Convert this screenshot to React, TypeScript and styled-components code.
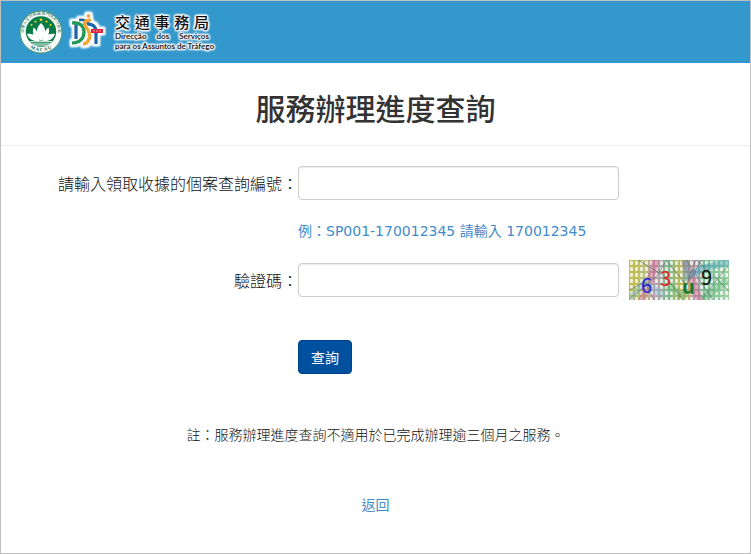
import React from "react";
import styled, { createGlobalStyle } from "styled-components";

const cjk = `"Noto Sans CJK TC", sans-serif`;

const GlobalStyle = createGlobalStyle`
  *, *::before, *::after { box-sizing: border-box; }
  body {
    margin: 0;
    background: #fff;
    color: #333;
    font: 14px/20px "DejaVu Sans", ${cjk};
  }
`;

const Page = styled.div`
  min-height: 100vh;
  border: 1px solid #bfbfbf;
`;

const Header = styled.header`
  display: flex;
  align-items: center;
  height: 62px;
  padding: 0 18px;
  background: #3398cc;
`;

const Brand = styled.a`
  display: flex;
  align-items: center;
  gap: 4px;
  color: #111;
  text-decoration: none;
`;

const Wordmark = styled.div`
  width: 94px;
  margin-left: 2px;
  text-shadow: 0 0 2px #fff, 0 0 2px #fff, 0 0 2px #fff, 0 0 3px #fff, 0 0 3px #fff,
    1px 1px 2px #fff, -1px -1px 2px #fff, 1px -1px 2px #fff, -1px 1px 2px #fff;
`;

const Spread = styled.div`
  display: flex;
  justify-content: space-between;
  white-space: nowrap;
`;

const ChineseName = styled(Spread)`
  font: 500 15px/18px ${cjk};
`;

const LatinName = styled(Spread)`
  color: #222;
  font: 700 8px/10px Lato, "Liberation Sans", sans-serif;
`;

const TitleBar = styled.div`
  padding: 22px 16px 16px;
  border-bottom: 1px solid #eee;
`;

const Title = styled.h1`
  margin: 0;
  font: 500 30px/44px ${cjk};
  text-align: center;
`;

const Form = styled.form`
  display: grid;
  grid-template-columns: 297fr 321fr 131fr;
  align-items: center;
  padding-top: 20px;
`;

const Label = styled.label`
  grid-column: 1;
  font: 300 16px/24px ${cjk};
  color: #111;
  text-align: right;
  white-space: nowrap;
`;

const TextInput = styled.input`
  grid-column: 2;
  width: 100%;
  height: 34px;
  padding: 6px 12px;
  border: 1px solid #ccc;
  border-radius: 4px;
  background: #fff;
  box-shadow: inset 0 1px 1px rgba(0, 0, 0, 0.075);
  color: #555;
  font: inherit;
`;

const Hint = styled.p`
  grid-column: 2 / 4;
  margin: 21px 0 19px;
  color: #428bca;
  white-space: nowrap;
`;

const Captcha = styled.div`
  grid-column: 3;
  padding-left: 10px;

  svg { display: block; }
`;

const SubmitButton = styled.button`
  grid-column: 2;
  justify-self: start;
  height: 34px;
  margin-top: 40px;
  padding: 0 12px;
  border: 1px solid #003f8a;
  border-radius: 4px;
  background: #0050a0;
  color: #fff;
  font: 400 14px/20px ${cjk};
  cursor: pointer;
`;

const Footer = styled.footer`
  display: grid;
  justify-items: center;
  gap: 50px;
  padding: 50px 16px 32px;
  font: 300 14px/20px ${cjk};
`;

const Note = styled.p`
  margin: 0;
  color: #111;
`;

const BackLink = styled.a`
  color: #428bca;
  font-weight: 400;
  text-decoration: none;
`;

function Emblem() {
  return (
    <svg width="44" height="44" viewBox="0 0 44 44" role="img" aria-label="MACAU">
      <defs>
        <path id="ringTop" d="M7.2 30A17 17 0 1 1 36.8 30" />
        <path id="ringBottom" d="M6.5 33.5A19.5 19.5 0 0 0 37.5 33.5" />
      </defs>
      <circle cx="22" cy="22" r="21" fill="#fff" stroke="#4e9873" strokeWidth="1" />
      <circle cx="22" cy="21.5" r="15.2" fill="#087a43" />
      <text fontFamily='"Noto Sans CJK TC", sans-serif' fontSize="4" fill="#286646">
        <textPath href="#ringTop" startOffset="50%" textAnchor="middle">中華人民共和國澳門特別行政區</textPath>
      </text>
      <text fontFamily="Liberation Serif, serif" fontSize="5" fontWeight="700" fill="#176442">
        <textPath href="#ringBottom" startOffset="50%" textAnchor="middle">M A C A U</textPath>
      </text>
      <g fill="#f3e32d">
        {[[12.5, 15, 1.5], [16.5, 11.5, 1.6], [22, 9.7, 2.1], [27.5, 11.5, 1.6], [31.5, 15, 1.5]].map(([x, y, s]) => (
          <path key={x} transform={`translate(${x} ${y}) scale(${s})`} d="M0-1 .24-.3 1-.3.38.14.6.85 0 .42-.6.85-.38.14-1-.3-.24-.3Z" />
        ))}
      </g>
      <g fill="#fff">
        <path d="M22 13C16.5 18 16.5 25 22 31C27.5 25 27.5 18 22 13Z" />
        <path d="M14.5 17.5C12.5 24 15.5 29 21.5 31C18.5 26.5 19.5 20.5 14.5 17.5Z" />
        <path d="M29.5 17.5C31.5 24 28.5 29 22.5 31C25.5 26.5 24.5 20.5 29.5 17.5Z" />
        <path d="M8 24C13.5 22.5 18 26 20.5 31C14.5 31.5 10 29.5 8 24Z" />
        <path d="M36 24C30.5 22.5 26 26 23.5 31C29.5 31.5 34 29.5 36 24Z" />
        <path d="M11 31.2H33V32.3H11ZM13 33.6H31V34.4H13ZM16 35.5H28V36.1H16Z" />
      </g>
    </svg>
  );
}

function DsatMark() {
  return (
    <svg width="42" height="44" viewBox="0 0 42 44" aria-hidden="true">
      <defs>
        <filter id="halo" x="-20%" y="-20%" width="140%" height="140%">
          <feMorphology in="SourceAlpha" operator="dilate" radius="2" result="wide" />
          <feGaussianBlur in="wide" stdDeviation="1" result="soft" />
          <feFlood floodColor="#fff" />
          <feComposite in2="soft" operator="in" result="white" />
          <feMerge>
            <feMergeNode in="white" />
            <feMergeNode in="white" />
            <feMergeNode in="SourceGraphic" />
          </feMerge>
        </filter>
      </defs>
      <g filter="url(#halo)" fill="none" strokeWidth="3.6">
        <path d="M9 13V29" stroke="#1769ad" />
        <path d="M5 13C13 12 17 16 17 22C17 28 13 33 5 33" stroke="#1b9c58" />
        <path d="M12 10C17 9 20 11 22 15" stroke="#1769ad" strokeWidth="3" />
        <path d="M21 14C26 14 29 17 29 22V34" stroke="#1769ad" />
        <path d="M24 10C18 10 16 13 19 17C23 22 24 27 21 31C20 33 18 34 16 34" stroke="#f3a733" />
        <circle cx="21.5" cy="6" r="1" fill="#f3a733" stroke="#f3a733" strokeWidth="2" />
        <path d="M24 19H36V23H24Z" fill="#e71f35" />
      </g>
      <path d="M26 21H35" stroke="#f7a6ad" strokeWidth="1" strokeDasharray="2 1" />
    </svg>
  );
}

function CaptchaPicture() {
  return (
    <svg width="100" height="40" viewBox="0 0 100 40" role="img" aria-label="驗證碼">
      <defs>
        <linearGradient id="wash">
          <stop offset="0" stopColor="#c4bd48" />
          <stop offset=".16" stopColor="#b9bf78" />
          <stop offset=".25" stopColor="#c69bb0" />
          <stop offset=".4" stopColor="#79b98d" />
          <stop offset=".54" stopColor="#cfba51" />
          <stop offset=".65" stopColor="#b99ab3" />
          <stop offset=".76" stopColor="#79bd92" />
          <stop offset="1" stopColor="#a4d2a7" />
        </linearGradient>
        <pattern id="mesh" width="5" height="6" patternUnits="userSpaceOnUse">
          <rect x="1" y="1" width="3" height="4" rx="1" fill="#fff" fillOpacity=".75" />
        </pattern>
        <clipPath id="frame"><path d="M0 0H100V40H0Z" /></clipPath>
      </defs>
      <g clipPath="url(#frame)">
        <path d="M0 0H100V40H0Z" fill="url(#wash)" />
        <path d="M0 0H100V40H0Z" fill="url(#mesh)" />
        <g fill="none" strokeWidth="7" strokeOpacity=".45">
          <path d="M27 0L20 23L12 42" stroke="#c65a84" />
          <path d="M55 0L64 21L71 42" stroke="#d16186" />
          <path d="M57 0V17L75 8L101 2" stroke="#3d9bbb" />
          <path d="M0 40L16 22L34 36" stroke="#83b9c4" />
          <path d="M39 25L57 38M74 39L98 20" stroke="#62b876" />
        </g>
        <g fill="none" stroke="#45665d" strokeOpacity=".55">
          <path d="M9 0L37 17L54 40M0 39L27 17L38 0M37 0L57 25L67 0" />
          <path d="M57 0L84 40M68 0L100 31M72 40L99 6M48 40L73 0M0 30L16 22L25 40" />
        </g>
        <g fontFamily='"Noto Sans CJK TC", sans-serif' fontSize="20">
          <text x="12" y="33" fill="#2420df">6</text>
          <text x="31" y="26" fill="#de2522">3</text>
          <text x="53" y="34" fill="#167a28" fontWeight="700">u</text>
          <text x="72" y="25" fill="#111">9</text>
        </g>
      </g>
    </svg>
  );
}

export default function App() {
  return (
    <>
      <GlobalStyle />
      <Page>
        <Header>
          <Brand href="#home">
            <Emblem />
            <DsatMark />
            <Wordmark>
              <ChineseName>
                {[..."交通事務局"].map((c) => <span key={c}>{c}</span>)}
              </ChineseName>
              <LatinName><span>Direcção</span><span>dos</span><span>Serviços</span></LatinName>
              <LatinName><span>para os Assuntos de Tráfego</span></LatinName>
            </Wordmark>
          </Brand>
        </Header>
        <main>
          <TitleBar><Title>服務辦理進度查詢</Title></TitleBar>
          <Form onSubmit={(e) => e.preventDefault()}>
            <Label htmlFor="caseNumber">請輸入領取收據的個案查詢編號：</Label>
            <TextInput id="caseNumber" type="text" aria-describedby="caseHint" />
            <Hint id="caseHint">例：SP001-170012345 請輸入 170012345</Hint>
            <Label htmlFor="captcha">驗證碼：</Label>
            <TextInput id="captcha" type="text" autoComplete="off" />
            <Captcha><CaptchaPicture /></Captcha>
            <SubmitButton type="submit">查詢</SubmitButton>
          </Form>
        </main>
        <Footer>
          <Note>註：服務辦理進度查詢不適用於已完成辦理逾三個月之服務。</Note>
          <BackLink href="#back">返回</BackLink>
        </Footer>
      </Page>
    </>
  );
}
